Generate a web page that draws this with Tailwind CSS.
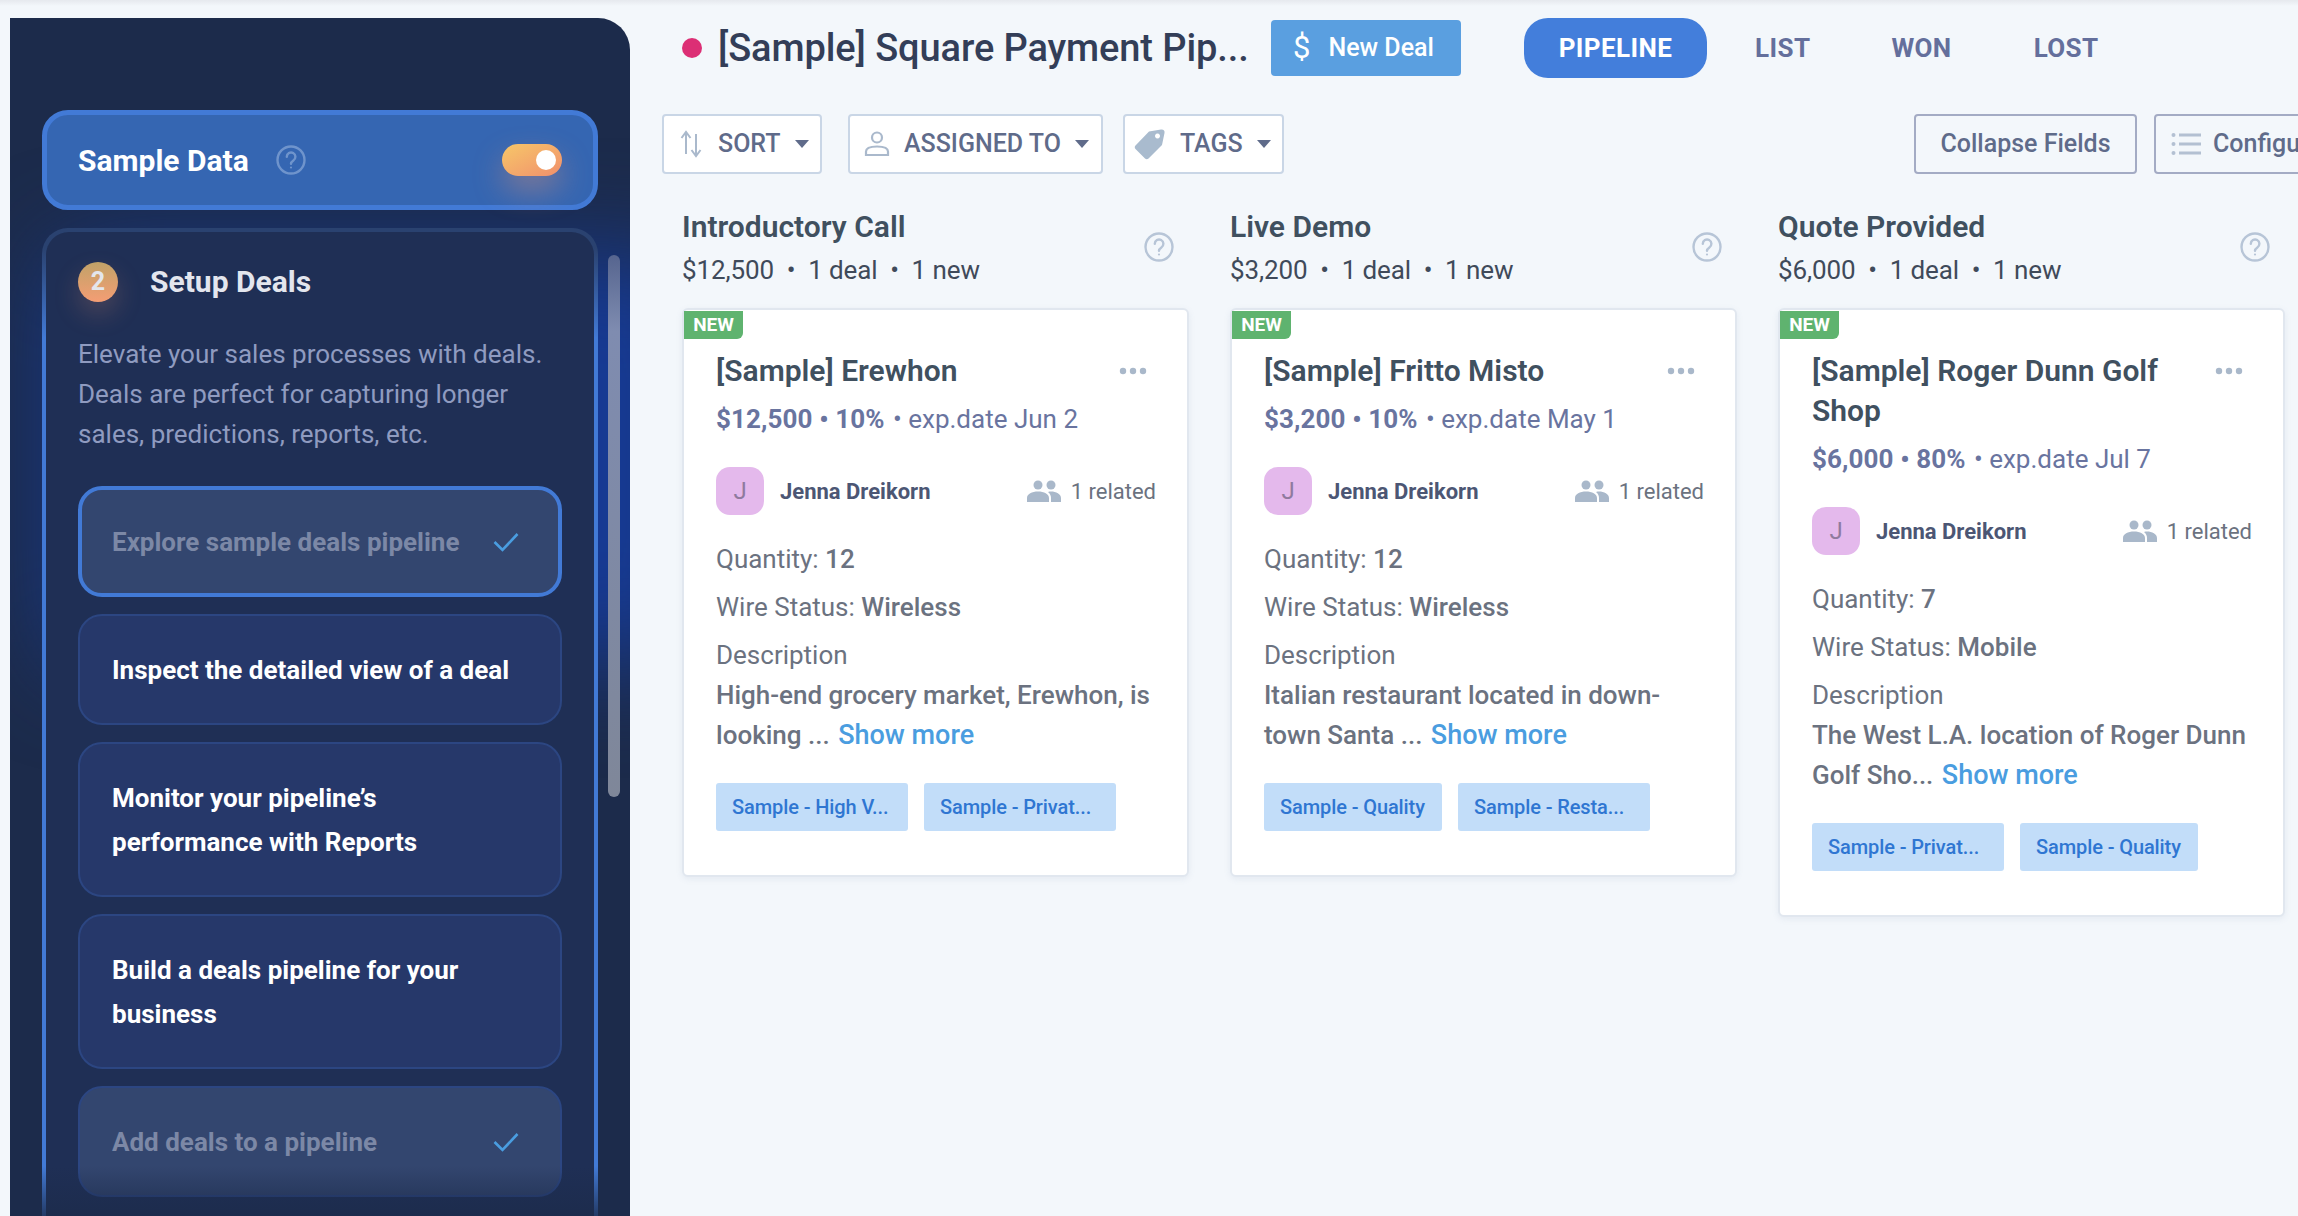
<!DOCTYPE html>
<html lang="en">
<head>
  <meta charset="UTF-8" />
  <title>Square Payment Pipeline</title>
  <script src="https://cdn.jsdelivr.net/npm/@tailwindcss/browser@4"></script>
</head>
<body class="font-['Roboto',sans-serif] bg-[#f3f7fb] h-[1216px] w-[2298px] overflow-hidden relative">
  <div class="absolute inset-x-0 top-0 h-[6px] bg-linear-to-b from-[#e6e9ee] to-[#f3f7fb]"></div>
  <div class="flex h-[1216px] relative">

    <!-- Sidebar -->
    <aside class="relative ml-[10px] mt-[18px] w-[620px] h-[1198px] shrink-0 bg-[#1c2b4b] rounded-tr-[32px] overflow-hidden">
      <div class="absolute left-[50px] top-[240px] w-[640px] h-[400px] bg-[#163a94] blur-[50px]"></div>

      <div class="relative ml-[32px] mt-[92px] w-[556px] h-[100px] bg-[#3566b2] border-[5px] border-[#427ad6] rounded-[26px] flex items-center pl-[31px] pr-[31px]">
        <span class="text-white font-bold text-[30px]">Sample Data</span>
        <svg class="ml-[27px]" width="30" height="30" viewBox="0 0 30 30" fill="none" stroke="#6f94cc" stroke-width="2.4">
          <circle cx="15" cy="15" r="13.5"/>
          <path d="M10.8 11.8a4.3 4.3 0 1 1 6.6 3.6c-1.5 1-2.4 1.800-2.400 3.400" stroke-linecap="round"/>
          <circle cx="15" cy="22.500" r="1.100" fill="#6f94cc" stroke="none"/>
        </svg>
        <div class="ml-auto w-[60px] h-[32px] rounded-full bg-linear-to-br from-[#f6c768] to-[#f08f6c] flex items-center justify-end pr-[6px] shadow-[0_14px_30px_rgba(240,150,110,0.4)]">
          <span class="block w-[20px] h-[20px] rounded-full bg-white"></span>
        </div>
      </div>

      <div class="relative ml-[32px] mt-[18px] w-[556px] h-[1000px] p-[4px] pb-0 rounded-t-[26px] bg-linear-to-b from-[#2a4270] from-[2%] via-[#427ad6] via-[11%] to-[#427ad6]">
        <div class="h-full bg-[#1f2f55] rounded-t-[23px] pl-[32px] pr-[24px] pt-[27px]">
          <div class="flex items-center">
            <span class="w-[40px] h-[40px] rounded-full bg-linear-to-b from-[#c0a268] to-[#f49d74] text-[#e4e6ec] font-bold text-[25px] flex items-center justify-center shadow-[0_12px_26px_rgba(240,150,110,0.22)]">2</span>
            <span class="ml-[32px] text-[#e3e6ee] font-bold text-[30px]">Setup Deals</span>
          </div>
          <p class="mt-[30px] text-[#8f9bc0] text-[26px] leading-[40px] whitespace-nowrap">Elevate your sales processes with deals.<br>Deals are perfect for capturing longer<br>sales, predictions, reports, etc.</p>

          <div class="mt-[32px] flex flex-col gap-[17px] w-[484px] font-bold text-[26px] leading-[44px]">
            <div class="h-[111px] bg-[#33466f] border-[4px] border-[#427ad6] rounded-[24px] pl-[30px] pr-[39px] flex items-center justify-between text-[#7c88a6]">
              <span>Explore sample deals pipeline</span>
              <svg width="26" height="20" viewBox="0 0 26 20" fill="none" stroke="#4a9de0" stroke-width="2.600"><path d="M1.500 10l8 8L24.500 2"/></svg>
            </div>
            <div class="h-[111px] bg-[#26386a] border-2 border-[#2c4682] rounded-[24px] pl-[32px] flex items-center text-white">Inspect the detailed view of a deal</div>
            <div class="h-[155px] bg-[#26386a] border-2 border-[#2c4682] rounded-[24px] pl-[32px] flex items-center text-white">
              <span>Monitor your pipeline’s<br>performance with Reports</span>
            </div>
            <div class="h-[155px] bg-[#26386a] border-2 border-[#2c4682] rounded-[24px] pl-[32px] flex items-center text-white">
              <span>Build a deals pipeline for your<br>business</span>
            </div>
            <div class="h-[111px] bg-[#33466f] border-2 border-[#2c4682] rounded-[24px] pl-[32px] pr-[41px] flex items-center justify-between text-[#7c88a6]">
              <span>Add deals to a pipeline</span>
              <svg width="26" height="20" viewBox="0 0 26 20" fill="none" stroke="#4a9de0" stroke-width="2.600"><path d="M1.500 10l8 8L24.500 2"/></svg>
            </div>
          </div>
        </div>
      </div>

      <div class="absolute left-[598px] top-[237px] w-[12px] h-[542px] rounded-full bg-linear-to-b from-[#56658f] via-[#7f8cb0] via-[14%] to-[#7f8799]"></div>
      <div class="absolute inset-x-0 bottom-0 h-[50px] bg-linear-to-b from-[#1c2b4b]/0 to-[#1c2b4b]/80"></div>
    </aside>

    <!-- Main -->
    <main class="w-[1668px] shrink-0 overflow-hidden">
      <div class="flex items-center h-[60px] mt-[18px] ml-[52px]">
        <span class="w-[20px] h-[20px] rounded-full bg-[#dc2f75] shrink-0"></span>
        <h1 class="ml-[16px] w-[553px] text-[38px] tracking-[-0.1px] font-medium text-[#333e58] whitespace-nowrap">[Sample] Square Payment Pip...</h1>
        <button class="w-[190px] h-[56px] bg-[#5a9fe0] rounded-[4px] text-white flex items-center pl-[22px] text-[25px] font-medium">
          <span class="text-[31px] font-normal mr-[18px]">$</span>New Deal
        </button>
        <div class="ml-[63px] w-[183px] h-[60px] rounded-[24px] bg-[#437edb] text-white font-bold text-[26px] tracking-[0.4px] flex items-center justify-center">PIPELINE</div>
        <span class="ml-[48px] font-bold text-[26px] tracking-[0.4px] text-[#646f9c]">LIST</span>
        <span class="ml-[81px] font-bold text-[26px] tracking-[0.4px] text-[#646f9c]">WON</span>
        <span class="ml-[82px] font-bold text-[26px] tracking-[0.4px] text-[#646f9c]">LOST</span>
      </div>

      <div class="flex items-stretch h-[60px] mt-[36px] ml-[32px] text-[25px] font-medium text-[#5f6b8a] whitespace-nowrap">
        <button class="w-[160px] shrink-0 bg-white border-2 border-[#c9d6e6] rounded-[4px] flex items-center pl-[16px]">
          <svg width="22" height="28" viewBox="0 0 22 28" fill="none" stroke="#aab9cc" stroke-width="2"><path d="M6 24V3M1.500 8L6 2l4.500 6"/><path d="M16 4v21M11.500 20l4.500 6 4.500-6"/></svg>
          <span class="ml-[16px]">SORT</span>
          <span class="ml-[14px] border-x-[7px] border-x-transparent border-t-[8px] border-t-[#5f6b8a]"></span>
        </button>
        <button class="ml-[26px] w-[255px] shrink-0 bg-white border-2 border-[#c9d6e6] rounded-[4px] flex items-center pl-[14px]">
          <svg width="26" height="26" viewBox="0 0 26 26" fill="none" stroke="#aab9cc" stroke-width="2.200"><circle cx="13" cy="6.500" r="5"/><path d="M2 24v-3.500c0-3 4-5 11-5s11 2 11 5V24z"/></svg>
          <span class="ml-[14px]">ASSIGNED TO</span>
          <span class="ml-[14px] border-x-[7px] border-x-transparent border-t-[8px] border-t-[#5f6b8a]"></span>
        </button>
        <button class="ml-[20px] w-[161px] shrink-0 bg-white border-2 border-[#c9d6e6] rounded-[4px] flex items-center pl-[9px]">
          <svg width="32" height="32" viewBox="0 0 32 32" fill="#a9bbce"><path d="M15 3.500 27 1.500c2.500-.3 4 1.200 3.500 3.500L28 17 14.500 30.500c-1 1-2.500 1-3.500 0L1.500 21c-1-1-1-2.500 0-3.500zM23.500 5.500a2.500 2.500 0 1 0 .01 0z" fill-rule="evenodd"/></svg>
          <span class="ml-[14px]">TAGS</span>
          <span class="ml-[14px] border-x-[7px] border-x-transparent border-t-[8px] border-t-[#5f6b8a]"></span>
        </button>
        <button class="ml-[630px] w-[223px] shrink-0 border-2 border-[#a3abc4] rounded-[4px] flex items-center justify-center">Collapse Fields</button>
        <button class="ml-[17px] w-[240px] shrink-0 border-2 border-[#a3abc4] rounded-[4px] flex items-center pl-[15px]">
          <svg width="30" height="24" viewBox="0 0 30 24" fill="#b3c0d2"><circle cx="2.500" cy="3" r="2"/><circle cx="2.500" cy="12" r="2"/><circle cx="2.500" cy="21" r="2"/><rect x="8" y="1.500" width="22" height="3"/><rect x="8" y="10.500" width="22" height="3"/><rect x="8" y="19.500" width="22" height="3"/></svg>
          <span class="ml-[12px]">Configure</span>
        </button>
      </div>

      <div class="flex gap-[42px] ml-[52px] mt-[33px]">

        <!-- Introductory Call -->
        <section class="w-[506px] shrink-0">
          <div class="flex items-center justify-between pr-[14px] h-[81px]">
            <div>
              <h2 class="text-[30px] leading-[40px] font-semibold text-[#40505f]">Introductory Call</h2>
              <p class="mt-[5px] text-[26px] leading-[36px] tracking-[-0.1px] text-[#3f4a5a] whitespace-pre">$12,500  •  1 deal  •  1 new</p>
            </div>
            <svg class="mt-[-2px]" width="30" height="30" viewBox="0 0 30 30" fill="none" stroke="#b7c5d7" stroke-width="2.400"><circle cx="15" cy="15" r="13.500"/><path d="M10.800 11.800a4.300 4.300 0 1 1 6.600 3.600c-1.500 1-2.400 1.800-2.400 3.400" stroke-linecap="round"/><circle cx="15" cy="22.500" r="1.100" fill="#b7c5d7" stroke="none"/></svg>
          </div>
          <article class="relative mt-[20px] w-[507px] h-[569px] bg-white border-2 border-[#e1e7ef] rounded-[6px] shadow-[0_2px_6px_rgba(120,140,170,0.12)] pl-[32px] pr-[31px] pt-[41px]">
            <span class="absolute left-0 top-[1px] w-[59px] h-[28px] bg-[#5fb36f] rounded-br-[6px] text-white font-bold text-[19px] leading-[28px] text-center">NEW</span>
            <div class="flex justify-between">
              <h3 class="w-[380px] text-[30px] leading-[40px] font-semibold text-[#40505f]">[Sample] Erewhon</h3>
              <svg class="mr-[9px] mt-[16px]" width="28" height="8" viewBox="0 0 28 8" fill="#a9b8ca"><circle cx="4" cy="4" r="3.200"/><circle cx="14" cy="4" r="3.200"/><circle cx="24" cy="4" r="3.200"/></svg>
            </div>
            <p class="mt-[8px] text-[26px] leading-[40px] text-[#69749f] whitespace-pre"><b class="font-bold tracking-[0.1px]">$12,500 • 10%</b><span class="ml-[2px]"> • exp.date Jun 2</span></p>
            <div class="mt-[28px] flex items-center h-[48px]">
              <span class="w-[48px] h-[48px] rounded-[14px] bg-[#e4b9ec] flex items-center justify-center text-[24px] text-[#8f7a9e]">J</span>
              <span class="ml-[16px] text-[22px] font-bold text-[#4c5674]">Jenna Dreikorn</span>
              <svg class="ml-auto" width="34" height="22" viewBox="0 0 34 22" fill="#a9b8ca"><circle cx="11" cy="5" r="4.500"/><circle cx="24" cy="5" r="4.500"/><path d="M0 22v-4c0-4 5-6.500 11-6.500s11 2.500 11 6.500v4zM24 22v-4c0-2.500-1-4.500-3-6 1-.4 2-.5 3-.5 5 0 10 2.500 10 6.500v4z"/></svg>
              <span class="ml-[10px] text-[22px] text-[#6b7280]">1 related</span>
            </div>
            <div class="mt-[24px] text-[26px] leading-[40px] text-[#6b7280]">
              <p>Quantity: <span class="font-medium">12</span></p>
              <p class="mt-[8px]">Wire Status: <span class="font-medium">Wireless</span></p>
              <p class="mt-[8px]">Description</p>
              <p class="mt-[0px] font-medium whitespace-nowrap">High-end grocery market, Erewhon, is</p>
              <p class="font-medium whitespace-nowrap">looking ... <span class="ml-[2px] text-[27px] text-[#4a9de0]">Show more</span></p>
            </div>
            <div class="mt-[28px] flex gap-[16px] text-[20px] font-medium text-[#2f76d2]">
              <span class="w-[192px] h-[48px] bg-[#c2ddf9] rounded-[3px] flex items-center pl-[16px] whitespace-nowrap tracking-[-0.1px]">Sample - High V...</span>
              <span class="w-[192px] h-[48px] bg-[#c2ddf9] rounded-[3px] flex items-center pl-[16px] whitespace-nowrap tracking-[-0.1px]">Sample - Privat...</span>
            </div>
          </article>
        </section>

        <!-- Live Demo -->
        <section class="w-[506px] shrink-0">
          <div class="flex items-center justify-between pr-[14px] h-[81px]">
            <div>
              <h2 class="text-[30px] leading-[40px] font-semibold text-[#40505f]">Live Demo</h2>
              <p class="mt-[5px] text-[26px] leading-[36px] tracking-[-0.1px] text-[#3f4a5a] whitespace-pre">$3,200  •  1 deal  •  1 new</p>
            </div>
            <svg class="mt-[-2px]" width="30" height="30" viewBox="0 0 30 30" fill="none" stroke="#b7c5d7" stroke-width="2.400"><circle cx="15" cy="15" r="13.500"/><path d="M10.800 11.800a4.300 4.300 0 1 1 6.600 3.600c-1.500 1-2.400 1.800-2.400 3.400" stroke-linecap="round"/><circle cx="15" cy="22.500" r="1.100" fill="#b7c5d7" stroke="none"/></svg>
          </div>
          <article class="relative mt-[20px] w-[507px] h-[569px] bg-white border-2 border-[#e1e7ef] rounded-[6px] shadow-[0_2px_6px_rgba(120,140,170,0.12)] pl-[32px] pr-[31px] pt-[41px]">
            <span class="absolute left-0 top-[1px] w-[59px] h-[28px] bg-[#5fb36f] rounded-br-[6px] text-white font-bold text-[19px] leading-[28px] text-center">NEW</span>
            <div class="flex justify-between">
              <h3 class="w-[380px] text-[30px] leading-[40px] font-semibold text-[#40505f]">[Sample] Fritto Misto</h3>
              <svg class="mr-[9px] mt-[16px]" width="28" height="8" viewBox="0 0 28 8" fill="#a9b8ca"><circle cx="4" cy="4" r="3.200"/><circle cx="14" cy="4" r="3.200"/><circle cx="24" cy="4" r="3.200"/></svg>
            </div>
            <p class="mt-[8px] text-[26px] leading-[40px] text-[#69749f] whitespace-pre"><b class="font-bold tracking-[0.1px]">$3,200 • 10%</b><span class="ml-[2px]"> • exp.date May 1</span></p>
            <div class="mt-[28px] flex items-center h-[48px]">
              <span class="w-[48px] h-[48px] rounded-[14px] bg-[#e4b9ec] flex items-center justify-center text-[24px] text-[#8f7a9e]">J</span>
              <span class="ml-[16px] text-[22px] font-bold text-[#4c5674]">Jenna Dreikorn</span>
              <svg class="ml-auto" width="34" height="22" viewBox="0 0 34 22" fill="#a9b8ca"><circle cx="11" cy="5" r="4.500"/><circle cx="24" cy="5" r="4.500"/><path d="M0 22v-4c0-4 5-6.500 11-6.500s11 2.500 11 6.500v4zM24 22v-4c0-2.500-1-4.500-3-6 1-.4 2-.5 3-.5 5 0 10 2.500 10 6.500v4z"/></svg>
              <span class="ml-[10px] text-[22px] text-[#6b7280]">1 related</span>
            </div>
            <div class="mt-[24px] text-[26px] leading-[40px] text-[#6b7280]">
              <p>Quantity: <span class="font-medium">12</span></p>
              <p class="mt-[8px]">Wire Status: <span class="font-medium">Wireless</span></p>
              <p class="mt-[8px]">Description</p>
              <p class="mt-[0px] font-medium whitespace-nowrap">Italian restaurant located in down-</p>
              <p class="font-medium whitespace-nowrap">town Santa ... <span class="ml-[2px] text-[27px] text-[#4a9de0]">Show more</span></p>
            </div>
            <div class="mt-[28px] flex gap-[16px] text-[20px] font-medium text-[#2f76d2]">
              <span class="w-[178px] h-[48px] bg-[#c2ddf9] rounded-[3px] flex items-center pl-[16px] whitespace-nowrap tracking-[-0.1px]">Sample - Quality</span>
              <span class="w-[192px] h-[48px] bg-[#c2ddf9] rounded-[3px] flex items-center pl-[16px] whitespace-nowrap tracking-[-0.1px]">Sample - Resta...</span>
            </div>
          </article>
        </section>

        <!-- Quote Provided -->
        <section class="w-[506px] shrink-0">
          <div class="flex items-center justify-between pr-[14px] h-[81px]">
            <div>
              <h2 class="text-[30px] leading-[40px] font-semibold text-[#40505f]">Quote Provided</h2>
              <p class="mt-[5px] text-[26px] leading-[36px] tracking-[-0.1px] text-[#3f4a5a] whitespace-pre">$6,000  •  1 deal  •  1 new</p>
            </div>
            <svg class="mt-[-2px]" width="30" height="30" viewBox="0 0 30 30" fill="none" stroke="#b7c5d7" stroke-width="2.400"><circle cx="15" cy="15" r="13.500"/><path d="M10.800 11.800a4.300 4.300 0 1 1 6.600 3.600c-1.500 1-2.400 1.800-2.400 3.400" stroke-linecap="round"/><circle cx="15" cy="22.500" r="1.100" fill="#b7c5d7" stroke="none"/></svg>
          </div>
          <article class="relative mt-[20px] w-[507px] h-[609px] bg-white border-2 border-[#e1e7ef] rounded-[6px] shadow-[0_2px_6px_rgba(120,140,170,0.12)] pl-[32px] pr-[31px] pt-[41px]">
            <span class="absolute left-0 top-[1px] w-[59px] h-[28px] bg-[#5fb36f] rounded-br-[6px] text-white font-bold text-[19px] leading-[28px] text-center">NEW</span>
            <div class="flex justify-between">
              <h3 class="w-[380px] text-[30px] leading-[40px] font-semibold text-[#40505f]">[Sample] Roger Dunn Golf Shop</h3>
              <svg class="mr-[9px] mt-[16px]" width="28" height="8" viewBox="0 0 28 8" fill="#a9b8ca"><circle cx="4" cy="4" r="3.200"/><circle cx="14" cy="4" r="3.200"/><circle cx="24" cy="4" r="3.200"/></svg>
            </div>
            <p class="mt-[8px] text-[26px] leading-[40px] text-[#69749f] whitespace-pre"><b class="font-bold tracking-[0.1px]">$6,000 • 80%</b><span class="ml-[2px]"> • exp.date Jul 7</span></p>
            <div class="mt-[28px] flex items-center h-[48px]">
              <span class="w-[48px] h-[48px] rounded-[14px] bg-[#e4b9ec] flex items-center justify-center text-[24px] text-[#8f7a9e]">J</span>
              <span class="ml-[16px] text-[22px] font-bold text-[#4c5674]">Jenna Dreikorn</span>
              <svg class="ml-auto" width="34" height="22" viewBox="0 0 34 22" fill="#a9b8ca"><circle cx="11" cy="5" r="4.500"/><circle cx="24" cy="5" r="4.500"/><path d="M0 22v-4c0-4 5-6.500 11-6.500s11 2.500 11 6.500v4zM24 22v-4c0-2.500-1-4.500-3-6 1-.4 2-.5 3-.5 5 0 10 2.500 10 6.500v4z"/></svg>
              <span class="ml-[10px] text-[22px] text-[#6b7280]">1 related</span>
            </div>
            <div class="mt-[24px] text-[26px] leading-[40px] text-[#6b7280]">
              <p>Quantity: <span class="font-medium">7</span></p>
              <p class="mt-[8px]">Wire Status: <span class="font-medium">Mobile</span></p>
              <p class="mt-[8px]">Description</p>
              <p class="mt-[0px] font-medium whitespace-nowrap">The West L.A. location of Roger Dunn</p>
              <p class="font-medium whitespace-nowrap">Golf Sho... <span class="ml-[2px] text-[27px] text-[#4a9de0]">Show more</span></p>
            </div>
            <div class="mt-[28px] flex gap-[16px] text-[20px] font-medium text-[#2f76d2]">
              <span class="w-[192px] h-[48px] bg-[#c2ddf9] rounded-[3px] flex items-center pl-[16px] whitespace-nowrap tracking-[-0.1px]">Sample - Privat...</span>
              <span class="w-[178px] h-[48px] bg-[#c2ddf9] rounded-[3px] flex items-center pl-[16px] whitespace-nowrap tracking-[-0.1px]">Sample - Quality</span>
            </div>
          </article>
        </section>
      </div>
    </main>
  </div>
</body>
</html>
